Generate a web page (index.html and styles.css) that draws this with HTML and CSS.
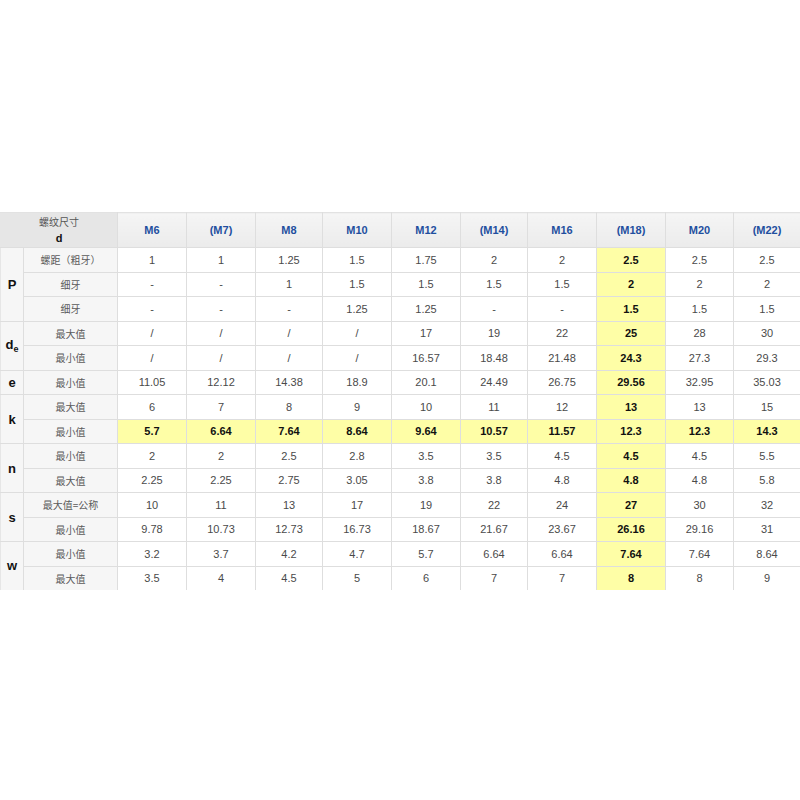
FILE: index.html
```html
<!DOCTYPE html>
<html>
<head>
<meta charset="utf-8">
<link rel="stylesheet" href="styles.css">
</head>
<body>
<div class="wrap">
<table class="spec">
<colgroup>
<col class="c-sym"><col class="c-sub">
<col class="c69"><col class="c69"><col class="c67"><col class="c69"><col class="c69"><col class="c67"><col class="c69"><col class="c69"><col class="c68"><col class="c67">
</colgroup>
<thead>
<tr class="head">
<th colspan="2" class="corner">螺纹尺寸<br><b>d</b></th>
<th>M6</th><th>(M7)</th><th>M8</th><th>M10</th><th>M12</th><th>(M14)</th><th>M16</th><th class="hl">(M18)</th><th>M20</th><th>(M22)</th>
</tr>
</thead>
<tbody>
<tr><td rowspan="3" class="sym">P</td><td class="sub">螺距（粗牙）</td><td>1</td><td>1</td><td>1.25</td><td>1.5</td><td>1.75</td><td>2</td><td>2</td><td class="hl">2.5</td><td>2.5</td><td>2.5</td></tr>
<tr><td class="sub">细牙</td><td>-</td><td>-</td><td>1</td><td>1.5</td><td>1.5</td><td>1.5</td><td>1.5</td><td class="hl">2</td><td>2</td><td>2</td></tr>
<tr><td class="sub">细牙</td><td>-</td><td>-</td><td>-</td><td>1.25</td><td>1.25</td><td>-</td><td>-</td><td class="hl">1.5</td><td>1.5</td><td>1.5</td></tr>
<tr><td rowspan="2" class="sym">d<sub>e</sub></td><td class="sub">最大值</td><td>/</td><td>/</td><td>/</td><td>/</td><td>17</td><td>19</td><td>22</td><td class="hl">25</td><td>28</td><td>30</td></tr>
<tr><td class="sub">最小值</td><td>/</td><td>/</td><td>/</td><td>/</td><td>16.57</td><td>18.48</td><td>21.48</td><td class="hl">24.3</td><td>27.3</td><td>29.3</td></tr>
<tr><td class="sym">e</td><td class="sub">最小值</td><td>11.05</td><td>12.12</td><td>14.38</td><td>18.9</td><td>20.1</td><td>24.49</td><td>26.75</td><td class="hl">29.56</td><td>32.95</td><td>35.03</td></tr>
<tr><td rowspan="2" class="sym">k</td><td class="sub">最大值</td><td>6</td><td>7</td><td>8</td><td>9</td><td>10</td><td>11</td><td>12</td><td class="hl">13</td><td>13</td><td>15</td></tr>
<tr class="hlrow"><td class="sub">最小值</td><td class="hl">5.7</td><td class="hl">6.64</td><td class="hl">7.64</td><td class="hl">8.64</td><td class="hl">9.64</td><td class="hl">10.57</td><td class="hl">11.57</td><td class="hl">12.3</td><td class="hl">12.3</td><td class="hl">14.3</td></tr>
<tr><td rowspan="2" class="sym">n</td><td class="sub">最小值</td><td>2</td><td>2</td><td>2.5</td><td>2.8</td><td>3.5</td><td>3.5</td><td>4.5</td><td class="hl">4.5</td><td>4.5</td><td>5.5</td></tr>
<tr><td class="sub">最大值</td><td>2.25</td><td>2.25</td><td>2.75</td><td>3.05</td><td>3.8</td><td>3.8</td><td>4.8</td><td class="hl">4.8</td><td>4.8</td><td>5.8</td></tr>
<tr><td rowspan="2" class="sym">s</td><td class="sub">最大值=公称</td><td>10</td><td>11</td><td>13</td><td>17</td><td>19</td><td>22</td><td>24</td><td class="hl">27</td><td>30</td><td>32</td></tr>
<tr><td class="sub">最小值</td><td>9.78</td><td>10.73</td><td>12.73</td><td>16.73</td><td>18.67</td><td>21.67</td><td>23.67</td><td class="hl">26.16</td><td>29.16</td><td>31</td></tr>
<tr><td rowspan="2" class="sym">w</td><td class="sub">最小值</td><td>3.2</td><td>3.7</td><td>4.2</td><td>4.7</td><td>5.7</td><td>6.64</td><td>6.64</td><td class="hl">7.64</td><td>7.64</td><td>8.64</td></tr>
<tr class="last"><td class="sub">最大值</td><td>3.5</td><td>4</td><td>4.5</td><td>5</td><td>6</td><td>7</td><td>7</td><td class="hl">8</td><td>8</td><td>9</td></tr>
</tbody>
</table>
</div>
</body>
</html>
```
FILE: styles.css
```css
html, body {
  margin: 0;
  padding: 0;
  background: #ffffff;
}
.wrap {
  padding-top: 212px;
  width: 800px;
  height: 378px;
  overflow: hidden;
}
.spec {
  width: 800px;
  table-layout: fixed;
  border-collapse: collapse;
  font-family: "Liberation Sans", Arial, "Noto Sans CJK SC", sans-serif;
  font-size: 11px;
  color: #4a4a4a;
}
.c-sym { width: 23px; }
.c-sub { width: 94px; }
.c69 { width: 69px; }
.c67 { width: 67px; }
.c68 { width: 68px; }
.spec th, .spec td {
  border: 1px solid #dedede;
  text-align: center;
  vertical-align: middle;
  padding: 0;
  height: 23.5px;
}
.spec tr:first-child th { border-top: 1px solid #e2e2e2; }
.spec th:first-child, .spec td.sym { border-left: 1px solid #e6e6e6; }
.head th {
  height: 34px;
  background: linear-gradient(#f5f5f5, #ebebeb);
  color: #1f4f9f;
  font-weight: bold;
  font-size: 11px;
}
.head th.corner {
  background: #e6e6e6;
  color: #555;
  font-weight: normal;
  font-family: "Noto Sans CJK SC", sans-serif;
  font-size: 10px;
  line-height: 16px;
}
.head th.corner b {
  color: #111;
  font-family: "Liberation Sans", Arial, sans-serif;
  font-size: 11px;
}
td.sym {
  background: #f6f6f6;
  color: #111;
  font-weight: bold;
  font-size: 13px;
}
td.sym sub {
  font-size: 9px;
  vertical-align: -3px;
}
td.sub {
  background: #f6f6f6;
  color: #5a5a5a;
  font-family: "Noto Sans CJK SC", sans-serif;
  font-size: 10px;
}
td.hl {
  background: #fefea6;
  color: #111;
  font-weight: bold;
}
tr.last td { border-bottom: none; }
```
